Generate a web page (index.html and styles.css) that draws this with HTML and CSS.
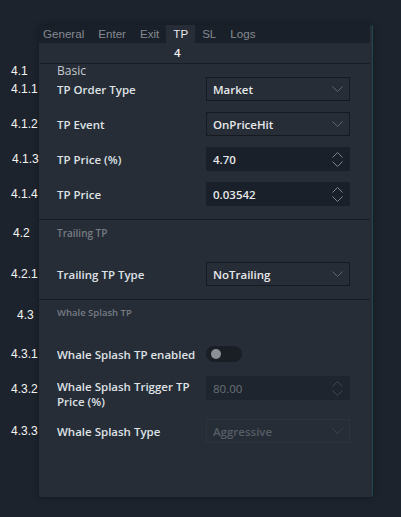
FILE: index.html
```html
<!DOCTYPE html>
<html>
<head>
<meta charset="utf-8">
<link rel="stylesheet" href="styles.css">
</head>
<body>
<div class="page">
  <div class="panel">
    <nav class="tabs">
      <span class="tab first">General</span>
      <span class="tab">Enter</span>
      <span class="tab">Exit</span>
      <span class="tab active">TP</span>
      <span class="tab">SL</span>
      <span class="tab">Logs</span>
    </nav>
    <div class="tabnum">4</div>

    <section class="section s1">
      <div class="title basic"><span class="ann a-title">4.1</span>Basic</div>
      <div class="rows">
        <div class="row"><span class="ann">4.1.1</span><span class="label">TP Order Type</span>
          <div class="select"><span>Market</span><svg class="chev" width="11" height="6" viewBox="0 0 11 6"><path d="M0.5 0.5 L5.5 5.5 L10.5 0.5" fill="none" stroke="#5f666d" stroke-width="1"/></svg></div>
        </div>
        <div class="row"><span class="ann">4.1.2</span><span class="label">TP Event</span>
          <div class="select"><span>OnPriceHit</span><svg class="chev" width="11" height="6" viewBox="0 0 11 6"><path d="M0.5 0.5 L5.5 5.5 L10.5 0.5" fill="none" stroke="#5f666d" stroke-width="1"/></svg></div>
        </div>
        <div class="row"><span class="ann a-shift1">4.1.3</span><span class="label">TP Price (%)</span>
          <div class="input"><span>4.70</span><svg class="spin" width="11" height="15" viewBox="0 0 11 15"><path d="M0.5 5.5 L5.5 0.5 L10.5 5.5 M0.5 9.5 L5.5 14.5 L10.5 9.5" fill="none" stroke="#7d838a" stroke-width="1"/></svg></div>
        </div>
        <div class="row"><span class="ann">4.1.4</span><span class="label">TP Price</span>
          <div class="input"><span>0.03542</span><svg class="spin" width="11" height="15" viewBox="0 0 11 15"><path d="M0.5 5.5 L5.5 0.5 L10.5 5.5 M0.5 9.5 L5.5 14.5 L10.5 9.5" fill="none" stroke="#7d838a" stroke-width="1"/></svg></div>
        </div>
      </div>
    </section>

    <section class="section s2">
      <div class="title dim"><span class="ann a-shift2">4.2</span>Trailing TP</div>
      <div class="rows">
        <div class="row"><span class="ann">4.2.1</span><span class="label">Trailing TP Type</span>
          <div class="select"><span>NoTrailing</span><svg class="chev" width="11" height="6" viewBox="0 0 11 6"><path d="M0.5 0.5 L5.5 5.5 L10.5 0.5" fill="none" stroke="#5f666d" stroke-width="1"/></svg></div>
        </div>
      </div>
    </section>

    <section class="section s3">
      <div class="title dim small"><span class="ann a-shift3">4.3</span>Whale Splash TP</div>
      <div class="rows">
        <div class="row"><span class="ann">4.3.1</span><span class="label">Whale Splash TP enabled</span>
          <div class="toggle"><span class="knob"></span></div>
        </div>
        <div class="row top"><span class="ann a-two">4.3.2</span><span class="label two">Whale Splash Trigger TP Price (%)</span>
          <div class="input disabled"><span>80.00</span><svg class="spin" width="11" height="15" viewBox="0 0 11 15"><path d="M0.5 5.5 L5.5 0.5 L10.5 5.5 M0.5 9.5 L5.5 14.5 L10.5 9.5" fill="none" stroke="#3f464e" stroke-width="1"/></svg></div>
        </div>
        <div class="row"><span class="ann">4.3.3</span><span class="label">Whale Splash Type</span>
          <div class="select disabled"><span>Aggressive</span><svg class="chev" width="11" height="6" viewBox="0 0 11 6"><path d="M0.5 0.5 L5.5 5.5 L10.5 0.5" fill="none" stroke="#3a4149" stroke-width="1"/></svg></div>
        </div>
      </div>
    </section>
  </div>
</div>
</body>
</html>
```

FILE: styles.css
```css
html, body {
  margin: 0;
  padding: 0;
}
body {
  background: #1c232c;
  font-family: "Open Sans", "Noto Sans", sans-serif;
  width: 401px;
  height: 517px;
  overflow: hidden;
}
.page {
  padding: 17px 0 0 39px;
}
.panel {
  width: 334px;
  height: 472px;
  box-sizing: border-box;
  background: #262d37;
  border-radius: 2px;
  border-right: 1px solid #1f4851;
  box-shadow: 0 0 6px rgba(0, 0, 0, 0.3);
}
.tabs {
  display: flex;
  margin: 8px 2px 0 0;
  height: 18px;
  background: #1a2029;
}
.tab {
  padding: 0 7px;
  font-family: "Liberation Sans", Arial, sans-serif;
  font-size: 11.6px;
  line-height: 18px;
  color: #848a91;
}
.tab.first {
  padding-left: 4px;
}
.tab.active {
  background: #262d37;
  color: #e8e9ea;
}
.tabnum {
  height: 20px;
  line-height: 20px;
  padding-left: 134px;
  font-size: 11.5px;
  font-weight: 600;
  color: #f2f2f2;
  border-bottom: 1px solid #181d24;
  margin: 0 2px 0 1px;
}
.section {
  padding: 0 23px 13px 18px;
  border-bottom: 1px solid #181d24;
  margin-right: 2px;
}
.s3 {
  border-bottom: none;
}
.title {
  position: relative;
  line-height: 14px;
  height: 13px;
  font-size: 12px;
  color: #c6cace;
}
.title.dim {
  margin-top: 6px;
  margin-bottom: 23px;
  font-size: 10px;
  font-weight: 600;
  color: #767c83;
}
.title.small {
  font-size: 9.5px;
}
.rows {
  display: flex;
  flex-direction: column;
  gap: 11px;
}
.s3 .rows {
  gap: 10px;
}
.row {
  position: relative;
  display: flex;
  align-items: center;
  min-height: 24px;
}
.row.top {
  align-items: flex-start;
}
.label {
  flex: 0 0 149px;
  font-size: 11.5px;
  font-weight: 600;
  line-height: 15px;
  color: #dfe2e5;
}
.label.two {
  padding-top: 3px;
  padding-right: 8px;
  box-sizing: border-box;
}
.ann {
  position: absolute;
  left: -46px;
  font-family: "Liberation Sans", Arial, sans-serif;
  font-size: 12px;
  font-weight: 400;
  color: #f4f4f4;
  line-height: 14px;
}
.title .ann {
  top: 0;
}
.ann.a-shift1 { left: -45px; }
.ann.a-shift2 { left: -44px; top: 0; }
.ann.a-shift3 { left: -40px; top: 2px; }
.ann.a-two { top: 6px; }
.select,
.input {
  flex: 0 0 144px;
  height: 24px;
  box-sizing: border-box;
  display: flex;
  align-items: center;
  justify-content: space-between;
  padding: 0 6px 0 6px;
  font-size: 11.5px;
  font-weight: 600;
  color: #e6e8ea;
}
.select {
  border: 1px solid #151a20;
}
.input {
  background: #1a2029;
  border: 1px solid #1a2029;
  border-radius: 1px;
}
.input.disabled {
  background: #1e252e;
  border-color: #1e252e;
  color: #6b7178;
  font-weight: 400;
}
.select.disabled {
  border-color: #2c333c;
  color: #565d64;
}
.toggle {
  width: 36px;
  height: 16px;
  border-radius: 8px;
  background: #1a1f26;
  display: flex;
  align-items: center;
  padding-left: 5px;
  box-sizing: border-box;
}
.knob {
  width: 10px;
  height: 10px;
  border-radius: 50%;
  background: #8b9096;
}
```
